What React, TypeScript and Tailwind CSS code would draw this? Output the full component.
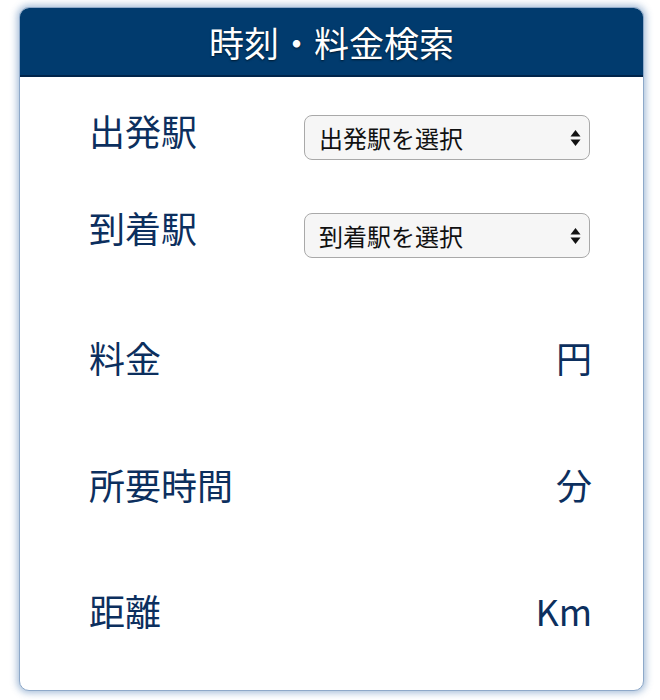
import React from 'react';

const font = { fontFamily: '"Noto Sans CJK JP", "Noto Sans", sans-serif' };

const Arrows = () => (
  <svg width="11" height="18" viewBox="0 0 11 18" className="absolute right-[9px] top-1/2 -translate-y-1/2 pointer-events-none">
    <path d="M5.5 1 L10.5 7.5 H0.5 Z" fill="#111" />
    <path d="M5.5 17 L10.5 10.5 H0.5 Z" fill="#111" />
  </svg>
);

const StationSelect = ({ placeholder }: { placeholder: string }) => (
  <div className="relative w-[286px] h-[45px]">
    <select
      className="appearance-none w-full h-full rounded-[8px] border border-[#a9a9a9] bg-[#f6f6f6] pl-[14px] text-[24px] text-[#111] outline-none"
      defaultValue=""
    >
      <option value="">{placeholder}</option>
    </select>
    <Arrows />
  </div>
);

const ResultRow = ({ label, unit, className }: { label: string; unit: string; className: string }) => (
  <div className={`flex items-center justify-between h-[44px] ${className}`}>
    <span className="text-[36px] text-[#0c2f5e] leading-none">{label}</span>
    <span className="text-[36px] text-[#0c2f5e] leading-none -mr-[2px]">{unit}</span>
  </div>
);

export default function App() {
  return (
    <div className="w-[660px] h-[700px] bg-white pt-[7px] pl-[19px]" style={font}>
      <div className="w-[625px] h-[684px] rounded-[10px] border border-[#8ea9c9] bg-white shadow-[0_0_7px_2px_rgba(60,110,170,0.45)] overflow-hidden">
        <div className="h-[69px] bg-[#013b6e] border-b-2 border-[#00244a] flex items-center justify-center">
          <h1 className="text-[35px] text-white leading-none [text-shadow:0_1px_2px_rgba(0,0,0,0.6)]">
            時刻・料金検索
          </h1>
        </div>
        <div className="pl-[69px] pr-[53px] pt-[38px]">
          <div className="flex items-center justify-between h-[45px]">
            <span className="text-[36px] text-[#0c2f5e] leading-none -mt-[15px]">出発駅</span>
            <StationSelect placeholder="出発駅を選択" />
          </div>
          <div className="flex items-center justify-between h-[45px] mt-[53px]">
            <span className="text-[36px] text-[#0c2f5e] leading-none -mt-[17px]">到着駅</span>
            <StationSelect placeholder="到着駅を選択" />
          </div>
          <ResultRow label="料金" unit="円" className="mt-[77px]" />
          <ResultRow label="所要時間" unit="分" className="mt-[83px]" />
          <ResultRow label="距離" unit="Km" className="mt-[82px]" />
        </div>
      </div>
    </div>
  );
}
